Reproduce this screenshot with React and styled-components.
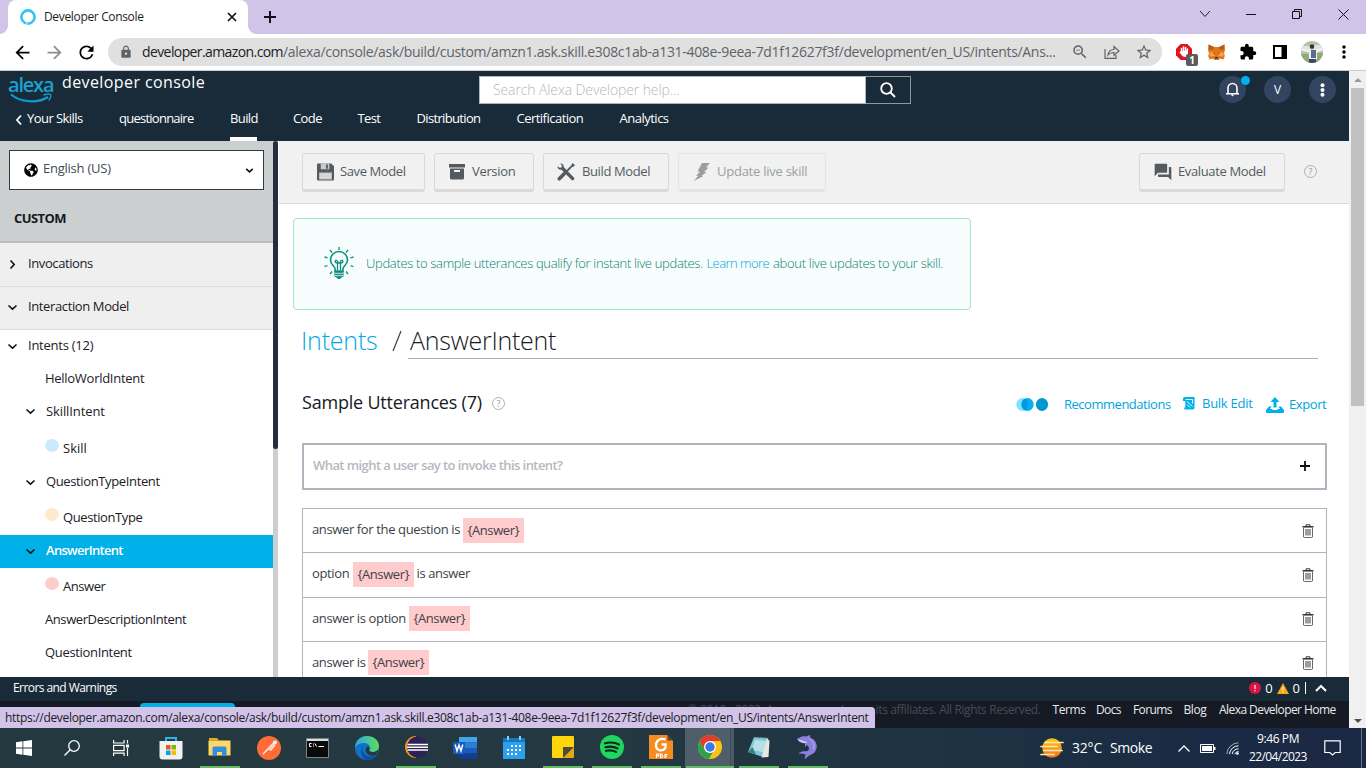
import React from 'react';
import styled, { createGlobalStyle, css } from 'styled-components';
import {
  MdArrowBack, MdArrowForward, MdRefresh, MdLock, MdZoomOut, MdStarOutline,
  MdExtension, MdMoreVert, MdForum,
} from 'react-icons/md';
import { FaGlobeAmericas } from 'react-icons/fa';

const GlobalStyle = createGlobalStyle`
  * { box-sizing: border-box; }
  body { margin: 0; background: #fff; font-family: "Open Sans", "Noto Sans", sans-serif; overflow: hidden; }
  svg { display: block; flex: none; }
`;

const Text = styled.span`
  display: block;
  flex: none;
  white-space: pre;
  font-size: ${(p) => p.$size || 13}px;
  line-height: ${(p) => p.$lh || 18}px;
  font-weight: ${(p) => p.$weight || 400};
  letter-spacing: ${(p) => p.$ls || 0}px;
  color: ${(p) => p.$color || 'inherit'};
  width: ${(p) => (p.$w ? `${p.$w}px` : 'auto')};
`;
const Label = styled(Text)`
  padding-bottom: ${(p) => p.$lift || 2}px;
`;

const Screen = styled.div`
  position: relative;
  width: 1366px;
  height: 768px;
  display: flex;
  flex-direction: column;
  overflow: hidden;
`;

/* Browser frame */
const TabStrip = styled.div`
  height: 34px;
  flex: none;
  background: #d1c4e8;
  display: flex;
  padding-left: 8px;
`;
const Tab = styled.div`
  position: relative;
  width: 240px;
  height: 34px;
  background: #fff;
  border-radius: 8px 8px 0 0;
  display: flex;
  align-items: center;
  padding: 0 11px 0 12px;
  &::before, &::after {
    content: '';
    position: absolute;
    bottom: 0;
    width: 8px;
    height: 8px;
  }
  &::before { left: -8px; background: radial-gradient(circle at 0 0, transparent 7.5px, #fff 8px); }
  &::after { right: -8px; background: radial-gradient(circle at 100% 0, transparent 7.5px, #fff 8px); }
`;
const TabTitle = styled(Text)`
  margin-left: 8px;
  flex: 1;
`;
const NewTab = styled.div`
  margin-left: 15px;
  display: flex;
  align-items: center;
`;
const WindowControls = styled.div`
  margin-left: auto;
  display: flex;
  height: 28px;
`;
const WindowButton = styled.div`
  width: 46px;
  display: flex;
  align-items: center;
  justify-content: center;
`;
const BrowserBar = styled.div`
  height: 37px;
  flex: none;
  border-bottom: 1px solid #c9ccd0;
  display: flex;
  align-items: center;
  padding: 0 6px;
  background: #fff;
`;
const IconCell = styled.div`
  position: relative;
  width: 32px;
  height: 28px;
  flex: none;
  display: flex;
  align-items: center;
  justify-content: center;
  color: ${(p) => p.$color || '#000'};
`;
const AddressBar = styled.div`
  margin: 0 6px;
  width: 1054px;
  height: 28px;
  border-radius: 14px;
  background: #e0e0e0;
  display: flex;
  align-items: center;
  padding: 0 2px 0 11px;
  color: #5f6368;
`;
const Url = styled.div`
  display: flex;
  flex: 1;
  margin-left: 9px;
`;
const CountBadge = styled.div`
  position: absolute;
  left: 18px;
  top: 16px;
  width: 12px;
  height: 12px;
  border-radius: 2px;
  background: #5b5b5b;
  color: #fff;
  font-size: 10px;
  line-height: 12px;
  font-weight: 700;
  text-align: center;
`;

/* Page frame */
const Viewport = styled.div`
  height: 657px;
  flex: none;
  display: flex;
`;
const Page = styled.div`
  width: 1349px;
  display: flex;
  flex-direction: column;
`;
const PageScroll = styled.div`
  width: 17px;
  background: #f0f0f0;
  display: flex;
  flex-direction: column;
  align-items: center;
  padding: 7px 0 5px;
`;
const PageThumb = styled.div`
  width: 13px;
  height: 318px;
  margin: 6px 0 auto 0;
  background: #c1c1c1;
`;

/* Console header */
const Header = styled.header`
  height: 70px;
  flex: none;
  background: #192b38;
  color: #fff;
  display: flex;
  flex-direction: column;
`;
const HeaderTop = styled.div`
  height: 38px;
  display: flex;
  align-items: flex-start;
  padding: 5px 13px 0 8px;
`;
const Brand = styled.div`
  width: 54px;
  height: 30px;
  color: #1da0d1;
`;
const BrandSmile = styled.svg`
  margin: -3px 0 0 1px;
`;
const BrandName = styled(Text)`
  margin-top: -1px;
`;
const ProductName = styled(Text)`
  margin-top: -1px;
`;
const Search = styled.div`
  display: flex;
  width: 432px;
  height: 28px;
  margin-left: 275px;
`;
const SearchField = styled.div`
  width: 387px;
  background: #fff;
  border: 1px solid #aeb5bb;
  padding: 4px 13px;
`;
const SearchButton = styled.div`
  width: 45px;
  border: 1px solid #8d979f;
  border-left: 0;
  display: flex;
  align-items: center;
  justify-content: center;
`;
const HeaderTools = styled.div`
  margin-left: auto;
  display: flex;
  gap: 18px;
`;
const RoundButton = styled.div`
  position: relative;
  width: 27px;
  height: 27px;
  border-radius: 50%;
  background: #32445f;
  display: flex;
  align-items: center;
  justify-content: center;
`;
const AlertDot = styled.i`
  position: absolute;
  left: 22px;
  top: 0;
  width: 9px;
  height: 9px;
  border-radius: 50%;
  background: #00b0e8;
`;
const Nav = styled.nav`
  height: 32px;
  display: flex;
  gap: 36px;
  padding-left: 15px;
`;
const NavItem = styled.div`
  height: 32px;
  display: flex;
  align-items: flex-start;
  gap: 4px;
  border-bottom: 4px solid ${(p) => (p.$active ? '#fff' : 'transparent')};
`;

/* Sidebar */
const Body = styled.div`
  height: 536px;
  flex: none;
  display: flex;
  overflow: hidden;
`;
const Sidebar = styled.aside`
  width: 273px;
  flex: none;
  color: #1b2027;
`;
const SideHead = styled.div`
  height: 102px;
  background: #cbcfcf;
  border-bottom: 2px solid #bdbfbf;
  padding: 9px 9px 0;
`;
const LocaleSelect = styled.div`
  height: 40px;
  background: #fff;
  border: 1px solid #33393e;
  display: flex;
  align-items: center;
  padding: 0 9px 0 14px;
  color: #3f4a55;
`;
const LocaleName = styled(Text)`
  margin-left: 5px;
  margin-right: auto;
  padding-bottom: 4px;
`;
const SideTitle = styled(Text)`
  margin: 19px 0 0 5px;
  color: #16191f;
`;
const SectionRow = styled.div`
  height: ${(p) => p.$h}px;
  background: #efefef;
  border-bottom: 1px solid #dcdcdc;
  display: flex;
  align-items: center;
  padding: 0 0 1px 7px;
  gap: 10px;
`;
const TreeRow = styled.div`
  height: ${(p) => p.$h || 33}px;
  display: flex;
  align-items: center;
  padding-left: ${(p) => p.$indent}px;
  gap: 10px;
  ${(p) => p.$active && css`
    background: #00b0e8;
    color: #fff;
  `}
`;
const SlotRow = styled(TreeRow)`
  padding-left: 45px;
  padding-top: ${(p) => (p.$h === 38 ? 3 : 1)}px;
  gap: 4px;
`;
const SlotDot = styled.i`
  width: 14px;
  height: 13px;
  margin-bottom: 6px;
  border-radius: 50%;
  background: ${(p) => p.$color};
`;
const SideScroll = styled.div`
  width: 5px;
  flex: none;
  background: #cbcfcf;
`;
const SideThumb = styled.div`
  height: 308px;
  border-radius: 3px;
  background: #232f3e;
`;

/* Main */
const Main = styled.main`
  flex: 1;
  margin-left: 1px;
  min-width: 0;
`;
const Toolbar = styled.div`
  height: 63px;
  background: #f1f1f1;
  border-bottom: 1px solid #d8d8d8;
  display: flex;
  align-items: flex-start;
  gap: 9px;
  padding: 12px 32px 0 23px;
`;
const ToolButton = styled.div`
  width: ${(p) => p.$w}px;
  height: 39px;
  border: 1px solid #dadada;
  border-bottom-width: 3px;
  border-radius: 3px;
  display: flex;
  align-items: center;
  padding: 0 0 0 ${(p) => p.$pad || 13}px;
  gap: ${(p) => p.$gap || 7}px;
  color: #545b60;
  opacity: ${(p) => (p.$disabled ? 0.55 : 1)};
  margin-left: ${(p) => (p.$end ? 'auto' : '0')};
`;
const Help = styled.div`
  width: 13px;
  height: 13px;
  border: 1px solid #a9b3b2;
  border-radius: 50%;
  color: #8d9997;
  font-size: 9px;
  line-height: 11px;
  text-align: center;
  flex: none;
`;
const ToolbarHelp = styled(Help)`
  margin: 12px 0 0 10px;
`;
const Callout = styled.section`
  margin: 14px 0 0 14px;
  width: 678px;
  height: 92px;
  border: 1px solid #9fe8ca;
  border-radius: 4px;
  background: #f7fdfd;
  color: #0c7f70;
  display: flex;
  align-items: center;
  padding-left: 30px;
`;
const CalloutText = styled.div`
  display: flex;
  margin-left: 12px;
  gap: 3px;
`;
const TitleRow = styled.div`
  display: flex;
  height: 49px;
  margin: 0 31px 0 22px;
  padding-top: 13px;
`;
const Slash = styled.div`
  width: 30px;
  padding-left: 14px;
  height: 36px;
`;
const TitleField = styled.div`
  flex: 1;
  height: 36px;
  border-bottom: 1px solid #9fb3b0;
  padding-left: 2px;
`;
const SectionHead = styled.div`
  height: 84px;
  margin: 0 22px 0 23px;
  display: flex;
  align-items: center;
  padding-top: 4px;
`;
const HeadHelp = styled(Help)`
  margin-left: 10px;
`;
const Actions = styled.div`
  margin-left: auto;
  display: flex;
  align-items: center;
  color: #00a4e0;
  padding-top: 3px;
`;
const Action = styled.div`
  display: flex;
  align-items: center;
  gap: ${(p) => p.$gap}px;
  margin-left: ${(p) => p.$ml || 0}px;
  margin-top: ${(p) => p.$mt || 0}px;
`;
const UtteranceInput = styled.div`
  height: 47px;
  margin: 0 22px 0 23px;
  border: 2px solid #b3b3bd;
  display: flex;
  align-items: center;
  justify-content: space-between;
  padding: 0 15px 1px 9px;
`;
const UtteranceList = styled.div`
  margin: 18px 22px 0 23px;
  border: 1px solid #b3b3bd;
  border-bottom: 0;
  color: #3d4248;
`;
const UtteranceRow = styled.div`
  height: ${(p) => p.$h}px;
  border-bottom: 1px solid #b3b3bd;
  display: flex;
  align-items: flex-start;
  padding: ${(p) => p.$pt}px 12px 0 9px;
`;
const Phrase = styled(Text)`
  margin-top: ${(p) => p.$mt}px;
`;
const SlotTag = styled.div`
  width: 61px;
  height: 25px;
  margin: 0 3px;
  padding: 3px 0 0 5px;
  background: #ffcccd;
`;
const Delete = styled.div`
  margin: 6px 0 0 auto;
`;

/* Footer */
const ErrorsBar = styled.div`
  height: 24px;
  flex: none;
  background: #192b38;
  color: #fff;
  display: flex;
  align-items: center;
  padding: 0 22px 2px 13px;
`;
const Counts = styled.div`
  margin-left: auto;
  display: flex;
  align-items: center;
  gap: 4px;
`;
const Divider = styled.i`
  width: 1px;
  height: 12px;
  background: #fff;
  margin: 0 5px 0 1px;
`;
const Footer = styled.footer`
  flex: 1;
  background: #151a24;
  color: #e8eaec;
  display: flex;
  align-items: flex-start;
  justify-content: space-between;
  padding: 0 13px 0 140px;
`;
const FeedbackTab = styled.div`
  width: 95px;
  height: 20px;
  margin-top: 2px;
  border-radius: 4px;
  background: #00b0e8;
`;
const FooterLinks = styled.div`
  display: flex;
  gap: 12px;
`;
const StatusBubble = styled.div`
  position: absolute;
  left: 0;
  top: 707px;
  width: 875px;
  height: 21px;
  background: #d1c4e8;
  border-top-right-radius: 4px;
  padding: 2px 0 0 5px;
  color: #1c1a22;
`;

/* Taskbar */
const Taskbar = styled.div`
  height: 40px;
  flex: none;
  background: linear-gradient(90deg, #24393f 0%, #233841 45%, #1d3342 70%, #1a2944 90%, #1b2843 100%);
  display: flex;
  color: #fff;
`;
const TaskCell = styled.div`
  width: ${(p) => p.$w || 49}px;
  height: 40px;
  flex: none;
  display: flex;
  flex-direction: column;
  align-items: center;
  justify-content: center;
  padding-bottom: ${(p) => (p.$running ? 0 : 1)}px;
  background: ${(p) => (p.$active ? 'linear-gradient(90deg,#4e5f69 45px,#2f424d 45px,#4a5b65 46px)' : 'transparent')};
`;
const TaskIcon = styled.div`
  height: 38px;
  display: flex;
  align-items: center;
`;
const Running = styled.i`
  width: ${(p) => (p.$active ? 48 : 40)}px;
  height: 2px;
  background: #62bb62;
`;
const Tray = styled.div`
  margin-left: auto;
  display: flex;
  align-items: center;
  padding-right: 4px;
`;
const Weather = styled.div`
  display: flex;
  align-items: center;
  gap: 8px;
`;
const TrayIcons = styled.div`
  display: flex;
  align-items: center;
  gap: 10px;
  margin-left: 25px;
`;
const Clock = styled.div`
  margin: 0 17px 0 10px;
  display: flex;
  flex-direction: column;
  align-items: center;
`;
const ShowDesktop = styled.i`
  width: 1px;
  height: 40px;
  margin-left: 20px;
  background: #6a7488;
`;

const Chevron = ({ dir = 'down', size = 11, color = '#111', w = 1.6 }) => {
  const d = { down: 'M1.500 3.500l4 3.700L9.500 3.500', right: 'M3.500 1.500l3.700 4L3.500 9.500' }[dir];
  return (
    <svg width={size} height={size} viewBox="0 0 11 11" fill="none" stroke={color} strokeWidth={w}>
      <path d={d} />
    </svg>
  );
};

const Icon = ({ w, h, box, children, ...rest }) => (
  <svg width={w} height={h} viewBox={box || `0 0 ${w} ${h}`} fill="none" {...rest}>{children}</svg>
);

const SaveIcon = () => (
  <Icon w={17} h={18} box="0 0 18 18" fill="currentColor">
    <path d="M1 0h14l3 3v14a1 1 0 0 1-1 1H1a1 1 0 0 1-1-1V1a1 1 0 0 1 1-1z" />
    <path fill="#c9cbcc" d="M2.300 9.500h13.400V17H2.300zM4 0h9v6H4z" />
    <path d="M9.500 1h2v4.500h-2z" />
    <path stroke="#f1f1f1" strokeWidth=".8" d="M3 12h12M3 14.500h12" />
  </Icon>
);
const ArchiveIcon = () => (
  <Icon w={16} h={16} fill="currentColor">
    <path fillRule="evenodd" d="M0 0h16v3.600H0zM1 4.600h14V14a1.500 1.500 0 0 1-1.500 1.500h-11A1.500 1.500 0 0 1 1 14zM5 6v2h6V6z" />
  </Icon>
);
const ToolsIcon = () => (
  <Icon w={18} h={18}>
    <path fill="currentColor" d="M3.200.4C5.400.2 7 1.800 6.700 4L16.900 14.400a1.700 1.700 0 0 1-2.400 2.400L4.200 6.600C2 6.900.3 5.300.3 3.200l2.400 1.500 1.900-.3.200-1.900z" />
    <path stroke="currentColor" strokeWidth="1.800" d="M16.500 1.300L9 9" />
    <path stroke="currentColor" strokeWidth="3.600" strokeLinecap="round" d="M7 11l-4.700 4.800" />
    <path fill="currentColor" d="M15.500 0L18 2.200l-2 1.700-1.600-1.700z" />
  </Icon>
);
const BoltIcon = () => (
  <Icon w={17} h={18} fill="currentColor">
    <path d="M9 0h8l-4 4.500h2.600L11 9h2.600L8.500 13h2L.8 18l4.500-5.300H3L7.200 8.500H4.500z" />
  </Icon>
);
const BulbIcon = () => (
  <Icon w={30} h={34} stroke="#0e8f7d" strokeWidth="1.300">
    <path strokeWidth="1.600" d="M11 24v-2.500c0-2-4.500-4-4.500-8.500a8.500 8.500 0 0 1 17 0c0 4.500-4.500 6.500-4.500 8.500V24z" />
    <path d="M13.500 23v-7c-3.500-.5-2.500-3.500-.7-2.500 1 .6 1.200 1.500 1.200 2.500h2c0-1 .2-1.900 1.200-2.500 1.800-1 2.800 2-.7 2.500v7" />
    <path fill="#0e8f7d" stroke="none" d="M10.500 24h9v5.500l-2.500 1.200-.8 1.300h-2.400l-.8-1.300-2.500-1.200z" />
    <path stroke="#f7fdfd" strokeWidth=".8" d="M11 26.300h8M11 28.600h8" />
    <path d="M15 0v3M6 3l2 2.500M24 3l-2 2.500M.5 10l3 .8M29.500 10l-3 .8M.5 19.500l3-.9M29.500 19.500l-3-.9M6 27l2-2.500M24 27l-2-2.500" />
  </Icon>
);
const Recommend = () => (
  <Icon w={33} h={13}>
    <ellipse cx="6.500" cy="6.500" rx="6.300" ry="6.400" fill="#7fe3ff" />
    <ellipse cx="11.500" cy="6.500" rx="6.200" ry="6.400" fill="#00b0f0" />
    <path fill="#0097e6" d="M9 .8a6.300 6.400 0 0 1 0 11.400A6.500 6.500 0 0 1 9 .8z" />
    <ellipse cx="26" cy="6.500" rx="6.100" ry="6.400" fill="#0097cc" />
  </Icon>
);
const BulkIcon = () => (
  <Icon w={12} h={13}>
    <path fill="#00b0e8" d="M0 1.700A1.700 1.700 0 0 1 1.700 0h9.800v10.800a1.700 1.700 0 0 1-1.700 1.700H1.300v-2h1V4H0z" />
    <path stroke="#fff" strokeWidth=".9" d="M2.500 2.500h7v4M4 4.500l5.500 5M4 7.500l3 3" />
  </Icon>
);
const ExportIcon = () => (
  <Icon w={18} h={16} fill="#00b0e8">
    <path d="M9 0l4.500 5h-3v5.500h-3V5h-3z" />
    <path d="M3 9.500h2.500L4 12h2l1 1h4l1-1h2l-1.500-2.500H15l3 3.500v2a1 1 0 0 1-1 1H1a1 1 0 0 1-1-1v-2z" />
  </Icon>
);
const TrashIcon = () => (
  <Icon w={12} h={14} stroke="#3b3b3b">
    <path d="M.5 2.800h11" strokeWidth="1.600" />
    <path d="M4 2V.8h4V2" strokeWidth="1" />
    <path d="M1.500 4v8a1.200 1.200 0 0 0 1.200 1.500h6.600a1.200 1.200 0 0 0 1.200-1.500V4" strokeWidth="1" stroke="#6a6a6a" />
    <path d="M4 5v6.500M6 5v6.500M8 5v6.500" strokeWidth="1" />
  </Icon>
);

const tools = [
  { label: 'Save Model', w: 123, ls: -0.4, icon: <SaveIcon />, pad: 14, gap: 6 },
  { label: 'Version', w: 100, ls: -0.33, icon: <ArchiveIcon />, pad: 14 },
  { label: 'Build Model', w: 126, ls: -0.38, icon: <ToolsIcon /> },
  { label: 'Update live skill', w: 148, ls: -0.25, icon: <BoltIcon />, pad: 14, disabled: true },
];

const navItems = [
  { label: 'questionnaire', w: 75, ls: -0.75 },
  { label: 'Build', w: 27, ls: -0.6, active: true },
  { label: 'Code', w: 28.5, ls: -0.6 },
  { label: 'Test', w: 23, ls: -0.6 },
  { label: 'Distribution', w: 64, ls: -0.66 },
  { label: 'Certification', w: 67, ls: -0.52 },
  { label: 'Analytics', w: 50, ls: -0.5 },
];

const tree = [
  { label: 'Intents (12)', indent: 7, open: true, h: 32, ls: -0.25 },
  { label: 'HelloWorldIntent', indent: 45, ls: -0.28 },
  { label: 'SkillIntent', indent: 25, open: true, ls: -0.1 },
  { label: 'Skill', dot: '#cdeafd', h: 38, ls: 0 },
  { label: 'QuestionTypeIntent', indent: 25, open: true, ls: -0.37, lift: 3 },
  { label: 'QuestionType', dot: '#ffe9cc', h: 36, ls: -0.4 },
  { label: 'AnswerIntent', indent: 25, open: true, active: true, ls: -0.7, lift: 3 },
  { label: 'Answer', dot: '#ffcccd', h: 36, ls: -0.45 },
  { label: 'AnswerDescriptionIntent', indent: 45, ls: -0.41, lift: 3 },
  { label: 'QuestionIntent', indent: 45, ls: -0.33, lift: 3 },
];

const utterances = [
  { before: 'answer for the question is', w: 147.5, h: 44, pt: 9, mt: 2 },
  { before: 'option', w: 37.5, after: 'is answer', h: 45, pt: 9, mt: 2 },
  { before: 'answer is option', w: 93.5, h: 44, pt: 8, mt: 3 },
  { before: 'answer is', w: 52.5, h: 45, pt: 8, mt: 3 },
];

const taskIcons = [
  { id: 'store', el: (
    <Icon w={24} h={24}>
      <path d="M7 6V2h10v4" stroke="#27b4ee" strokeWidth="2" />
      <path fill="#f1f1f1" d="M.5 5h23v15.500a3 3 0 0 1-3 3h-17a3 3 0 0 1-3-3z" />
      <path fill="#f25022" d="M7 9h4.500v4.500H7z" /><path fill="#7fba00" d="M12.500 9H17v4.500h-4.500z" />
      <path fill="#00a4ef" d="M7 14.500h4.500V19H7z" /><path fill="#ffb900" d="M12.500 14.500H17V19h-4.500z" />
    </Icon>) },
  { id: 'explorer', running: true, el: (
    <Icon w={23} h={20}>
      <path fill="#e8a921" d="M1 1h8l2 2.500H1z" /><path fill="#ffd766" d="M.5 3.500h22v15H.5z" />
      <path fill="#2f8fd8" d="M4.500 11a1.500 1.500 0 0 1 1.500-1.500h11a1.500 1.500 0 0 1 1.500 1.500v8H14v-4H9v4H4.500z" />
    </Icon>) },
  { id: 'postman', el: (
    <Icon w={24} h={24}>
      <circle cx="12" cy="12" r="12" fill="#ff6c37" />
      <path stroke="#fff" strokeWidth="1.200" d="M6 18l5-5 3 1 4-5" /><path stroke="#ffd2c2" strokeWidth="3" d="M11 13.500l6-6" />
      <circle cx="18" cy="6.500" r="2" fill="#fff" />
    </Icon>) },
  { id: 'terminal', el: (
    <Icon w={23} h={20}>
      <path fill="#0a0a0a" stroke="#7d8489" d="M.5.5h22v19H.5z" /><path fill="#d9dde0" d="M1 1h21v2H1z" />
      <path stroke="#fff" strokeWidth="1" d="M5.500 5.500H3.500v3h2M7.500 5.500v1M7.500 7.500v1M9 5.500l1.500 3M12.500 8.500H18" />
    </Icon>) },
  { id: 'edge', el: (
    <Icon w={24} h={24}>
      <defs>
        <linearGradient id="edgeTop" x1="0" x2="1"><stop stopColor="#2aa8e4" /><stop offset="1" stopColor="#5fdc5a" /></linearGradient>
      </defs>
      <circle cx="12" cy="12" r="12" fill="#1173c6" />
      <path fill="url(#edgeTop)" d="M0 12C0 5 5 0 12 0s12 4.600 12 10c0 3.500-2.500 6-6 6-3 0-4.500-1-3.500-2.500C16 11 14 7 9.500 7 5 7 1 9 0 12z" />
      <path fill="#0c4f9e" d="M8.500 9.500C6 13 8 20 14.500 20.500c3 .2 5.500-.8 7-2C19.500 22 16 24 12 24 6 23 4 14 8.500 9.500z" />
      <path fill="#233841" d="M14.500 13.500c-1 1.500.5 2.500 3.500 2.500 2.500 0 4.500-1 5.500-3-.3 2-1 4-2 5.500-3 2-9 1.500-10.500-2.500-.8-2 0-4.500 1.500-5.500 2 0 2.800 1.800 2 3z" />
    </Icon>) },
  { id: 'eclipse', running: true, el: (
    <Icon w={24} h={24}>
      <path fill="#f7941e" d="M12 1a11 11 0 0 0 0 22L9 12z" /><circle cx="13.500" cy="12" r="10.500" fill="#2c2255" />
      <path stroke="#fff" strokeWidth="1.500" d="M3.500 9.500H24M3 12.300h21M3.500 15H24" />
    </Icon>) },
  { id: 'word', el: (
    <Icon w={24} h={22}>
      <path fill="#41a5ee" d="M6 0h18v5.500H6z" /><path fill="#2b7cd3" d="M6 5.500h18V11H6z" /><path fill="#185abd" d="M6 11h18v5.500H6z" /><path fill="#103f91" d="M6 16.500h18V22H6z" />
      <path fill="#185abd" d="M0 5h12v12H0z" /><path stroke="#fff" strokeWidth="1.400" d="M2.200 7.500L4 14l2-6 2 6 1.800-6.500" />
    </Icon>) },
  { id: 'calendar', el: (
    <Icon w={22} h={23}>
      <path fill="#2aa1ea" d="M0 2h22v21H0z" /><path fill="#1579c4" d="M0 2h22v4H0z" /><path stroke="#7fd3fb" strokeWidth="2" d="M5 0v4M17 0v4" />
      <path stroke="#fff" strokeWidth="2" strokeDasharray="2 2" d="M8 10h11M4 14h15M4 18h10" />
    </Icon>) },
  { id: 'notes', running: true, el: (
    <Icon w={22} h={22}><path fill="#ffd60a" d="M0 1a1 1 0 0 1 1-1h20a1 1 0 0 1 1 1v10L11 22H1a1 1 0 0 1-1-1z" /><path fill="#4b4a3c" d="M11 11h11L11 22z" /><path fill="#e3a811" d="M22 11v10a1 1 0 0 1-1 1H11z" /></Icon>) },
  { id: 'spotify', running: true, el: (
    <Icon w={24} h={24}><circle cx="12" cy="12" r="12" fill="#1ed760" /><path stroke="#10261a" strokeLinecap="round" strokeWidth="2.200" d="M5 8.300c5-1.300 10-.9 14 1.200M5.500 12.200c4.500-1.100 8.500-.7 12 1.200M6 15.800c4-.9 7-.5 10 1.100" /></Icon>) },
  { id: 'pdf', running: true, el: (
    <Icon w={24} h={24}>
      <path fill="#f68b1f" d="M0 0h18l6 6v18H0z" /><path fill="#5b4633" d="M18.500 0L24 5.500h-5.500z" />
      <path stroke="#fff" strokeWidth="2.400" d="M16.500 4.500C11 2.500 6.500 6 7 11c.4 5 7 6 9.500 1.500V9.500h-4" />
      <path stroke="#fff" strokeWidth="1.200" d="M7.500 23v-4h2v2h-2M11.500 19v3.500h1c1.500 0 1.500-3 0-3zM16 23v-3.500h2.500M16 21.300h2" />
    </Icon>) },
  { id: 'chrome', running: true, active: true, el: (
    <Icon w={24} h={24}>
      <circle cx="12" cy="12" r="12" fill="#fbc116" /><path fill="#e33b2e" d="M1.600 6A12 12 0 0 1 22.400 6H12L6.800 15z" />
      <path fill="#2ba24c" d="M1.600 6l5.200 9 5.200 3 3-1-4.200 7A12 12 0 0 1 1.600 6z" /><circle cx="12" cy="12" r="6" fill="#fff" /><circle cx="12" cy="12" r="4.700" fill="#3b78e7" />
    </Icon>) },
  { id: 'notepad', running: true, el: (
    <Icon w={23} h={22}>
      <path fill="#7fc8d4" d="M7 1l14 1-5 19-15-5z" /><path fill="#b4e0e6" d="M8 4l11 1-3 11-12-2z" /><path fill="#e6e6e2" d="M20 2l2.500 3-1 16-7 .5z" />
      <path stroke="#4c5c60" strokeDasharray="1 1.500" d="M7 1.200l14 1" /><path fill="#3c7f8c" d="M1 16l4.500-5L9 18.500z" />
    </Icon>) },
  { id: 'dolphin', running: true, el: (
    <Icon w={22} h={24}>
      <path fill="#8a80dc" d="M0 3.500C3 3.500 4 .5 9 1.500L13 0v2.500C19 4.500 21.500 11 18.500 16c-1 2-3.500 3.500-5.500 4L8 24c-1-1.500.5-3 .5-4.500C6.500 18.500 4 18.500 1.500 18.500c2-2.500 5.500-2 9-2.500 2.500-1.500 1.500-4-.5-6L8 12V8.500C5.500 8 2 7 0 3.500z" />
      <path fill="#cfcaf5" d="M.5 4.500c4 1 7.500 1 10 3.500-4 .5-8-.5-10-3.500z" /><path stroke="#b8b1f1" d="M12 3.500c5 3 6 7 4 11" />
    </Icon>) },
];

export default function App() {
  return (
    <>
      <GlobalStyle />
      <Screen>
        <TabStrip>
          <Tab>
            <Icon w={16} h={16}><circle cx="8" cy="8" r="6.600" stroke="#31c4f3" strokeWidth="2.600" /><path stroke="#fff" strokeWidth=".8" d="M6.500 16l.6-3" /></Icon>
            <TabTitle $size={12} $ls={-0.34} $color="#1d1d1f">Developer Console</TabTitle>
            <Icon w={10} h={10} stroke="#111" strokeWidth="1.700"><path d="M1 1l8 8M9 1L1 9" /></Icon>
          </Tab>
          <NewTab><Icon w={14} h={14} stroke="#111" strokeWidth="2"><path d="M7 1v12M1 7h12" /></Icon></NewTab>
          <WindowControls>
            <WindowButton><Icon w={12} h={8} stroke="#222"><path d="M1 1l5 5.500L11 1" /></Icon></WindowButton>
            <WindowButton><Icon w={10} h={1}><path fill="#111" d="M0 0h10v1H0z" /></Icon></WindowButton>
            <WindowButton><Icon w={10} h={10} stroke="#111"><path d="M.5 2.500h7v7h-7zM2.500 2.500v-2h7v7h-2" /></Icon></WindowButton>
            <WindowButton><Icon w={11} h={11} stroke="#111"><path d="M.5.5l10 10M10.500.5l-10 10" /></Icon></WindowButton>
          </WindowControls>
        </TabStrip>

        <BrowserBar>
          <IconCell><MdArrowBack size={21} /></IconCell>
          <IconCell $color="#8e8e8e"><MdArrowForward size={21} /></IconCell>
          <IconCell><MdRefresh size={21} /></IconCell>
          <AddressBar>
            <MdLock size={14} />
            <Url>
              <Text $size={14} $ls={-0.6} $w={141} $color="#202124">developer.amazon.com</Text>
              <Text $size={14} $ls={-0.32}>/alexa/console/ask/build/custom/amzn1.ask.skill.e308c1ab-a131-408e-9eea-7d1f12627f3f/development/en_US/intents/Ans...</Text>
            </Url>
            <IconCell $color="#5f6368"><MdZoomOut size={18} /></IconCell>
            <IconCell $color="#5f6368">
              <Icon w={16} h={14} stroke="currentColor" strokeWidth="1.200"><path d="M1 4v9.300h11V10M4 10c.5-4 3-5.500 6-5.500V1.500L15 6l-5 4.200V7.500C7.500 7.500 5.500 8 4 10z" /></Icon>
            </IconCell>
            <IconCell $color="#5f6368"><MdStarOutline size={18} /></IconCell>
          </AddressBar>
          <IconCell>
            <Icon w={16} h={16}>
              <path fill="#e1141b" d="M4.700 0h6.600L16 4.700v6.600L11.300 16H4.700L0 11.300V4.700z" />
              <path stroke="#fff" strokeWidth="1.500" strokeLinecap="round" d="M5.500 8V4.500M7.500 7V3M9.500 7V3.500M11.300 8V5" /><path fill="#fff" d="M4.700 7h7.300v3.500c0 3-5 3-6 1L3.500 8.500z" />
            </Icon>
            <CountBadge>1</CountBadge>
          </IconCell>
          <IconCell>
            <Icon w={17} h={16}>
              <path fill="#e2761b" d="M.5.5L6 3h5L16.500.5 17 6l-1 3 .8 3-1.300 3.500-3.500-1L10.500 16h-4L5 14.500l-3.500 1L.2 12 1 9 0 6z" />
              <path fill="#f6a24a" d="M1 9l4-1 2 4-5 .5zM16 9l-4-1-2 4 5 .5z" /><path fill="#233447" d="M5 8.500l2 .8-.5.8zM12 8.500l-2 .8.500.8zM7.200 13h2.600l.4 1.500H6.800z" /><path fill="#b85c18" d="M.5.500L6 3l-1 3-4-.5zM16.500.500L11 3l1 3 4-.5z" />
            </Icon>
          </IconCell>
          <IconCell><MdExtension size={18} /></IconCell>
          <IconCell><Icon w={14} h={14}><path stroke="#000" strokeWidth="2" d="M1 1h12v12H1z" /><path fill="#000" d="M8.500 1H13v12H8.500z" /></Icon></IconCell>
          <IconCell>
            <Icon w={22} h={22}>
              <defs><clipPath id="face"><circle cx="11" cy="11" r="11" /></clipPath></defs>
              <g clipPath="url(#face)">
                <path fill="#b4c4a4" d="M0 0h22v22H0z" /><path fill="#dfe4e4" d="M0 5h9v5H0zM13 4h9v6h-9z" /><path fill="#8dab74" d="M0 13h8v9H0zM15 12h7v10h-7z" />
                <path fill="#eef0f4" d="M0 7.500l7 1h8l7-2v2.500l-6 2.500v7H8v-7l-8-2z" /><path fill="#5a6b92" d="M10 9h5v8h-5z" /><path fill="#3f4468" d="M8 18h7v4H8z" /><circle cx="11" cy="5.500" r="2.300" fill="#3a3134" />
              </g>
            </Icon>
          </IconCell>
          <IconCell><MdMoreVert size={20} /></IconCell>
        </BrowserBar>

        <Viewport>
          <Page>
            <Header>
              <HeaderTop>
                <Brand>
                  <BrandName $size={20} $lh={20} $ls={-1.2} $weight={600}>alexa</BrandName>
                  <BrandSmile width="46" height="12" viewBox="0 0 46 12" fill="none" stroke="#0f9bd0">
                    <path strokeWidth="2.200" d="M2 2.500C11 10 28 12 39 5" /><path strokeWidth="1.500" d="M34.500 3c3-1 6-1.200 7-.5.800 1 0 3.500-1.800 6" />
                  </BrandSmile>
                </Brand>
                <ProductName $size={16} $lh={14} $ls={0.4} $w={142}>developer console</ProductName>
                <Search>
                  <SearchField><Text $size={14} $ls={-0.11} $weight={300} $color="#b4b9bd">Search Alexa Developer help…</Text></SearchField>
                  <SearchButton><Icon w={16} h={16} stroke="#fff" strokeWidth="1.800"><circle cx="6.500" cy="6.500" r="5.300" /><path d="M10.500 10.500L15 15" /></Icon></SearchButton>
                </Search>
                <HeaderTools>
                  <RoundButton>
                    <Icon w={14} h={15} stroke="#fff" strokeWidth="1.600"><path d="M2 11.500V6a4.500 4.500 0 0 1 9 0v5.500M0 11.700h13" /><path fill="#fff" stroke="none" d="M4.700 12.500h3.600L6.500 14.500z" /></Icon>
                    <AlertDot />
                  </RoundButton>
                  <RoundButton><Text $size={12}>V</Text></RoundButton>
                  <RoundButton><Icon w={5} h={14}><g fill="#fff"><circle cx="2.500" cy="2.300" r="2" /><circle cx="2.500" cy="7" r="2" /><circle cx="2.500" cy="11.700" r="2" /></g></Icon></RoundButton>
                </HeaderTools>
              </HeaderTop>
              <Nav>
                <NavItem>
                  <Icon w={8} h={22} stroke="#fff" strokeWidth="1.800"><path d="M6 6.500L2 11l4 4.500" /></Icon>
                  <Text $ls={-0.55} $w={56}>Your Skills</Text>
                </NavItem>
                {navItems.map((n) => (
                  <NavItem key={n.label} $active={n.active}><Text $ls={n.ls} $w={n.w}>{n.label}</Text></NavItem>
                ))}
              </Nav>
            </Header>

            <Body>
              <Sidebar>
                <SideHead>
                  <LocaleSelect>
                    <FaGlobeAmericas size={14} color="#000" />
                    <LocaleName $ls={-0.24}>English (US)</LocaleName>
                    <Chevron size={9} w={2} />
                  </LocaleSelect>
                  <SideTitle $weight={700} $ls={-0.6}>CUSTOM</SideTitle>
                </SideHead>
                <SectionRow $h={44}><Chevron dir="right" /><Label $ls={-0.4}>Invocations</Label></SectionRow>
                <SectionRow $h={43}><Chevron /><Label $ls={-0.38} $lift={3}>Interaction Model</Label></SectionRow>
                {tree.map((t) => (t.dot ? (
                  <SlotRow key={t.label} $h={t.h}><SlotDot $color={t.dot} /><Label $ls={t.ls}>{t.label}</Label></SlotRow>
                ) : (
                  <TreeRow key={t.label} $h={t.h} $indent={t.indent} $active={t.active}>
                    {t.open && <Chevron />}
                    <Label $ls={t.ls} $lift={t.lift} $weight={t.active ? 600 : 400}>{t.label}</Label>
                  </TreeRow>
                )))}
              </Sidebar>
              <SideScroll><SideThumb /></SideScroll>

              <Main>
                <Toolbar>
                  {tools.map((t) => (
                    <ToolButton key={t.label} $w={t.w} $pad={t.pad} $gap={t.gap} $disabled={t.disabled}>{t.icon}<Label $ls={t.ls}>{t.label}</Label></ToolButton>
                  ))}
                  <ToolButton $w={146} $gap={5} $end><MdForum size={20} /><Label $ls={-0.37}>Evaluate Model</Label></ToolButton>
                  <ToolbarHelp>?</ToolbarHelp>
                </Toolbar>

                <Callout>
                  <BulbIcon />
                  <CalloutText>
                    <Label $weight={300} $ls={-0.33} $w={337.5}>Updates to sample utterances qualify for instant live updates.</Label>
                    <Label $weight={300} $ls={-0.55} $w={63.5} $color="#00a4e0">Learn more</Label>
                    <Label $weight={300} $ls={-0.31}>about live updates to your skill.</Label>
                  </CalloutText>
                </Callout>

                <TitleRow>
                  <Text $size={25} $lh={34} $weight={300} $ls={-0.2} $w={77} $color="#00a9e6">Intents</Text>
                  <Slash><Icon w={10} h={34} stroke="#3a3f45" strokeWidth="1.200"><path d="M1 28L9 8" /></Icon></Slash>
                  <TitleField><Text $size={25} $lh={34} $weight={300} $ls={-0.25} $color="#16191f">AnswerIntent</Text></TitleField>
                </TitleRow>

                <SectionHead>
                  <Label $size={18} $lh={24} $ls={-0.21} $w={180} $color="#16191f">Sample Utterances (7)</Label>
                  <HeadHelp>?</HeadHelp>
                  <Actions>
                    <Action $gap={15}><Recommend /><Label $weight={500} $ls={-0.48} $w={107}>Recommendations</Label></Action>
                    <Action $gap={7} $ml={12} $mt={-2}><BulkIcon /><Label $weight={500} $ls={-0.27} $w={51}>Bulk Edit</Label></Action>
                    <Action $gap={5} $ml={13}><ExportIcon /><Label $weight={500} $ls={-0.4} $w={38}>Export</Label></Action>
                  </Actions>
                </SectionHead>

                <UtteranceInput>
                  <Label $weight={600} $ls={-0.58} $color="#b7b7c0">What might a user say to invoke this intent?</Label>
                  <Icon w={10} h={10} stroke="#111" strokeWidth="1.800"><path d="M5 0v10M0 5h10" /></Icon>
                </UtteranceInput>

                <UtteranceList>
                  {utterances.map((u) => (
                    <UtteranceRow key={u.before} $h={u.h} $pt={u.pt}>
                      <Phrase $ls={-0.37} $w={u.w} $mt={u.mt}>{u.before}</Phrase>
                      <SlotTag><Text $ls={-0.4}>{'{Answer}'}</Text></SlotTag>
                      {u.after && <Phrase $ls={-0.4} $mt={u.mt}>{u.after}</Phrase>}
                      <Delete><TrashIcon /></Delete>
                    </UtteranceRow>
                  ))}
                </UtteranceList>
              </Main>
            </Body>

            <ErrorsBar>
              <Text $size={12} $ls={-0.57}>Errors and Warnings</Text>
              <Counts>
                <Icon w={12} h={12}><circle cx="6" cy="6" r="6" fill="#dd1343" /><path stroke="#fff" strokeWidth="1.200" d="M6 3v4M6 8v1.300" /></Icon>
                <Text $size={13}>0</Text>
                <Icon w={12} h={11}><path fill="#f9a51a" d="M6 0l6 11H0z" /><path stroke="#fff" d="M6 4v3.500M6 8.500v1.200" /></Icon>
                <Text $size={13}>0</Text>
                <Divider />
                <Icon w={12} h={12} stroke="#fff" strokeWidth="2"><path d="M1 9l5-5 5 5" /></Icon>
              </Counts>
            </ErrorsBar>
            <Footer>
              <FeedbackTab />
              <FooterLinks>
                <Text $size={12} $ls={-0.38} $color="#474c54">© 2010 - 2023, Amazon.com, Inc. or its affiliates. All Rights Reserved.</Text>
                <Text $size={12} $ls={-0.4} $w={31.5}>Terms</Text>
                <Text $size={12} $ls={-0.6} $w={25}>Docs</Text>
                <Text $size={12} $ls={-0.6} $w={38.5}>Forums</Text>
                <Text $size={12} $ls={-0.4} $w={23.5}>Blog</Text>
                <Text $size={12} $ls={-0.56} $w={117}>Alexa Developer Home</Text>
              </FooterLinks>
            </Footer>
          </Page>
          <PageScroll>
            <Icon w={8} h={4}><path fill="#9b9b9b" d="M4 0l4 4H0z" /></Icon>
            <PageThumb />
            <Icon w={8} h={4}><path fill="#505050" d="M0 0h8L4 4z" /></Icon>
          </PageScroll>
        </Viewport>

        <Taskbar>
          <TaskCell $w={48}><Icon w={16} h={16}><path fill="#fff" d="M0 2.200L6.500 1.300v6.300H0zM7.300 1.200L16 0v7.600H7.300zM0 8.400h6.500v6.300L0 13.800zM7.300 8.400H16V16l-8.700-1.200z" /></Icon></TaskCell>
          <TaskCell $w={48}><Icon w={16} h={16} stroke="#fff" strokeWidth="1.300"><circle cx="10" cy="6" r="5.300" /><path d="M6.200 9.800L.5 15.500" /></Icon></TaskCell>
          <TaskCell $w={50}><Icon w={17} h={16} stroke="#fff" strokeWidth="1.200"><path d="M.6 0v3h10.500V0M.6 16v-2.800h10.500V16M.6 5.300h10.500v5.400H.6zM14.500 0v3.500M14.500 8v8" /><path fill="#fff" stroke="none" d="M13 4.500h3v3h-3z" /></Icon></TaskCell>
          {taskIcons.map((t) => (
            <TaskCell key={t.id} $running={t.running} $active={t.active}>
              <TaskIcon>{t.el}</TaskIcon>
              {t.running && <Running $active={t.active} />}
            </TaskCell>
          ))}
          <Tray>
            <Weather>
              <Icon w={24} h={20}>
                <defs><linearGradient id="sun" x2="0" y2="1"><stop stopColor="#ffc814" /><stop offset="1" stopColor="#f0701c" /></linearGradient></defs>
                <circle cx="12" cy="10" r="9.800" fill="url(#sun)" /><path stroke="#ffe9bb" strokeWidth="1.700" strokeLinecap="round" d="M5 4.500h18M1 8.500h16M4 12.500h18M1 16.500h13" />
              </Icon>
              <Text $size={14} $ls={-0.2} $w={30}>32°C</Text>
              <Text $size={14} $ls={-0.4} $w={43}>Smoke</Text>
            </Weather>
            <TrayIcons>
              <Icon w={12} h={7} stroke="#fff" strokeWidth="1.300"><path d="M.5 6.500L6 1l5.500 5.500" /></Icon>
              <Icon w={16} h={9}><path stroke="#fff" d="M.5.5h13v8H.5z" /><path fill="#fff" d="M2 2h10v5H2zM14 3h1.500v3H14z" /></Icon>
              <Icon w={13} h={13} stroke="#fff"><path opacity=".6" d="M.8 12A12 12 0 0 1 12.500.8" /><path d="M3.500 12A9 9 0 0 1 12.500 3.800M6.200 12A6.500 6.500 0 0 1 12.500 6.800M8.800 12.200A4 4 0 0 1 12.500 9.500" /><circle cx="11.500" cy="11.500" r="1.300" fill="#fff" stroke="none" /></Icon>
            </TrayIcons>
            <Clock>
              <Text $size={12} $ls={-0.4}>9:46 PM</Text>
              <Text $size={12} $ls={-0.6} $w={58}>22/04/2023</Text>
            </Clock>
            <Icon w={17} h={16} stroke="#fff" strokeWidth="1.200"><path d="M.8.8h15.400v11.700h-5L8.500 15l-2.700-2.500h-5z" /></Icon>
            <ShowDesktop />
          </Tray>
        </Taskbar>

        <StatusBubble><Text $size={12} $ls={-0.315}>https://developer.amazon.com/alexa/console/ask/build/custom/amzn1.ask.skill.e308c1ab-a131-408e-9eea-7d1f12627f3f/development/en_US/intents/AnswerIntent</Text></StatusBubble>
      </Screen>
    </>
  );
}
